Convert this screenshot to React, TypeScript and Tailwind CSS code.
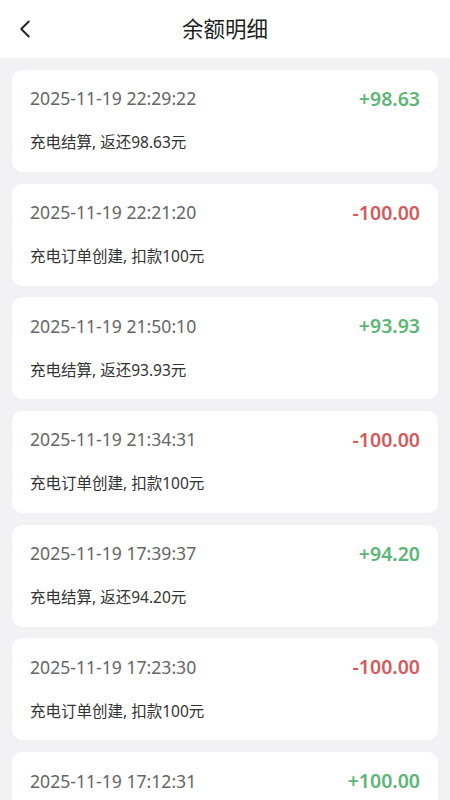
import React from 'react';
import { ChevronLeft } from 'lucide-react';

interface Record {
  time: string;
  amount: number;
  desc: string;
}

const records: Record[] = [
  { time: '2025-11-19 22:29:22', amount: 98.63, desc: '充电结算, 返还98.63元' },
  { time: '2025-11-19 22:21:20', amount: -100, desc: '充电订单创建, 扣款100元' },
  { time: '2025-11-19 21:50:10', amount: 93.93, desc: '充电结算, 返还93.93元' },
  { time: '2025-11-19 21:34:31', amount: -100, desc: '充电订单创建, 扣款100元' },
  { time: '2025-11-19 17:39:37', amount: 94.2, desc: '充电结算, 返还94.20元' },
  { time: '2025-11-19 17:23:30', amount: -100, desc: '充电订单创建, 扣款100元' },
  { time: '2025-11-19 17:12:31', amount: 100, desc: '充值成功, 充值100元' },
];

const font = { fontFamily: '"Noto Sans", "Noto Sans CJK SC", sans-serif' };

export default function App() {
  return (
    <div className="flex h-[800px] w-[450px] flex-col overflow-hidden bg-[#f2f2f4]" style={font}>
      {/* 顶部导航 */}
      <div className="relative flex h-[58px] shrink-0 items-center justify-center bg-white">
        <button className="absolute left-[10px] top-[14px] text-[#222]">
          <ChevronLeft className="h-[30px] w-[30px]" strokeWidth={1.5} />
        </button>
        <h1 className="text-[21.5px] text-[#222]">余额明细</h1>
      </div>

      <div className="flex flex-col gap-[11.7px] px-[12px] pt-[12px]">
        {records.map((r, i) => {
          const positive = r.amount > 0;
          return (
            <div key={i} className="flex h-[102px] shrink-0 flex-col rounded-[10px] bg-white px-[18px] pt-[14px]">
              <div className="flex items-center justify-between">
                <span className="text-[17.6px] text-[#666]">{r.time}</span>
                <span
                  className={
                    positive
                      ? 'text-[19.5px] font-semibold text-[#5cb676]'
                      : 'text-[19.5px] font-semibold text-[#d55a5c]'
                  }
                >
                  {positive ? '+' : '-'}
                  {Math.abs(r.amount).toFixed(2)}
                </span>
              </div>
              <div className="mt-[18px] text-[15.5px] text-[#333]">{r.desc}</div>
            </div>
          );
        })}
      </div>
    </div>
  );
}
